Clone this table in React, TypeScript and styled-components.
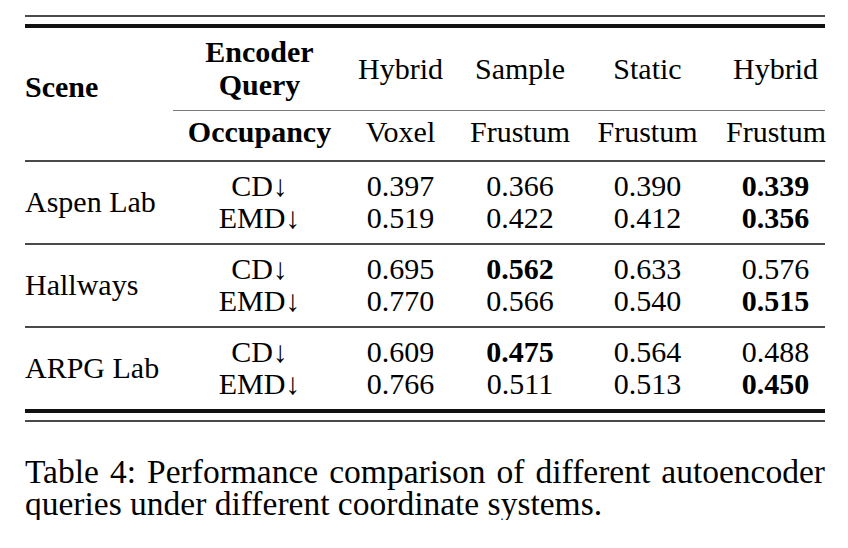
import React from "react";
import styled, { createGlobalStyle } from "styled-components";

const GlobalStyle = createGlobalStyle`
  html, body {
    margin: 0;
    padding: 0;
    background: #ffffff;
  }
  body {
    font-family: "Liberation Serif", "Times New Roman", serif;
    color: #000000;
  }
`;

const COLUMNS = "149px 171px 111px 128px 127px 114px";

const Page = styled.div`
  width: 800px;
  padding: 15px 0 0 25px;
`;

const Rule = styled.div<{ $size: number; $color: string; $gap?: number; $indent?: number }>`
  height: ${(p) => p.$size}px;
  background: ${(p) => p.$color};
  margin-top: ${(p) => p.$gap ?? 0}px;
  margin-left: ${(p) => p.$indent ?? 0}px;
`;

const Band = styled.div<{ $top: number; $bottom: number; $rows: string; $lh: number }>`
  display: grid;
  grid-template-columns: ${COLUMNS};
  grid-template-rows: ${(p) => p.$rows};
  padding: ${(p) => p.$top}px 0 ${(p) => p.$bottom}px;
  font-size: 30px;
  line-height: ${(p) => p.$lh}px;
`;

const Cell = styled.div<{
  $col: number;
  $row?: string;
  $left?: boolean;
  $bold?: boolean;
  $valign?: "start" | "center" | "end";
  $nudge?: number;
}>`
  grid-column: ${(p) => p.$col};
  grid-row: ${(p) => p.$row ?? "auto"};
  text-align: ${(p) => (p.$left ? "left" : "center")};
  font-weight: ${(p) => (p.$bold ? 700 : 400)};
  align-self: ${(p) => p.$valign ?? "start"};
  padding-left: ${(p) => (p.$col === 6 ? 15 : 0)}px;
  margin-bottom: ${(p) => p.$nudge ?? 0}px;
  white-space: nowrap;
`;

const Caption = styled.p`
  margin: 34px 0 0;
  font-size: 33.5px;
  line-height: 32px;
  text-align: justify;
`;

const queries = ["Hybrid", "Sample", "Static", "Hybrid"];
const occupancy = ["Voxel", "Frustum", "Frustum", "Frustum"];

type Metric = { name: string; values: string[]; best: number };
type Scene = { name: string; metrics: Metric[] };

const scenes: Scene[] = [
  {
    name: "Aspen Lab",
    metrics: [
      { name: "CD↓", values: ["0.397", "0.366", "0.390", "0.339"], best: 3 },
      { name: "EMD↓", values: ["0.519", "0.422", "0.412", "0.356"], best: 3 },
    ],
  },
  {
    name: "Hallways",
    metrics: [
      { name: "CD↓", values: ["0.695", "0.562", "0.633", "0.576"], best: 1 },
      { name: "EMD↓", values: ["0.770", "0.566", "0.540", "0.515"], best: 3 },
    ],
  },
  {
    name: "ARPG Lab",
    metrics: [
      { name: "CD↓", values: ["0.609", "0.475", "0.564", "0.488"], best: 1 },
      { name: "EMD↓", values: ["0.766", "0.511", "0.513", "0.450"], best: 3 },
    ],
  },
];

const MID = "#4a4a4a";

export default function App() {
  return (
    <>
      <GlobalStyle />
      <Page>
        <Rule $size={2} $color={MID} />
        <Rule $size={4} $color="#111" $gap={7} />

        <Band $top={7} $bottom={9} $rows="33px 33px" $lh={33}>
          <Cell $col={1} $row="1 / 3" $left $bold $valign="end" $nudge={-2}>
            Scene
          </Cell>
          <Cell $col={2} $row="1" $bold>
            Encoder
          </Cell>
          <Cell $col={2} $row="2" $bold>
            Query
          </Cell>
          {queries.map((q, i) => (
            <Cell key={i} $col={i + 3} $row="1 / 3" $valign="center">
              {q}
            </Cell>
          ))}
        </Band>
        <Rule $size={1} $color="#7a7a7a" $indent={148} />

        <Band $top={5} $bottom={12} $rows="32px" $lh={32}>
          <Cell $col={2} $bold>
            Occupancy
          </Cell>
          {occupancy.map((o, i) => (
            <Cell key={i} $col={i + 3}>
              {o}
            </Cell>
          ))}
        </Band>

        {scenes.map((scene) => (
          <React.Fragment key={scene.name}>
            <Rule $size={2} $color={MID} />
            <Band $top={8} $bottom={9} $rows="32px 32px" $lh={32}>
              <Cell $col={1} $row="1 / 3" $left $valign="center">
                {scene.name}
              </Cell>
              {scene.metrics.map((m, r) => (
                <React.Fragment key={m.name}>
                  <Cell $col={2} $row={`${r + 1}`}>
                    {m.name}
                  </Cell>
                  {m.values.map((v, i) => (
                    <Cell key={i} $col={i + 3} $row={`${r + 1}`} $bold={i === m.best}>
                      {v}
                    </Cell>
                  ))}
                </React.Fragment>
              ))}
            </Band>
          </React.Fragment>
        ))}

        <Rule $size={4} $color="#111" />
        <Rule $size={2} $color={MID} $gap={7} />

        <Caption>
          Table 4: Performance comparison of different autoencoder queries under different
          coordinate systems.
        </Caption>
      </Page>
    </>
  );
}
